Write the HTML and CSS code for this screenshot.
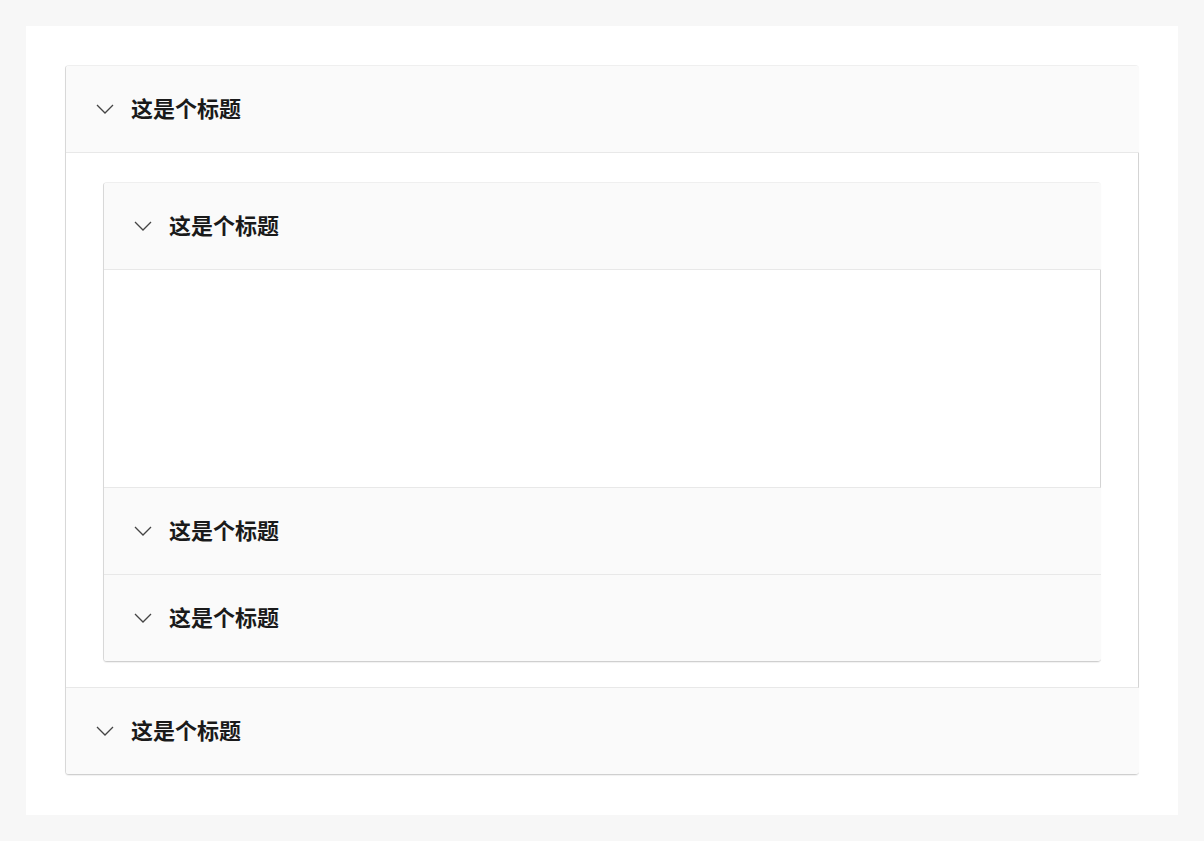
FILE: index.html
```html
<!DOCTYPE html>
<html lang="zh">
<head>
<meta charset="utf-8">
<link rel="stylesheet" href="styles.css">
</head>
<body>
<div class="panel">
  <div class="acc">
    <div class="acc-header">
      <svg class="chev" viewBox="0 0 18 10" width="18" height="10"><path d="M1 1 L9 9 L17 1" fill="none" stroke="#444" stroke-width="1.3"/></svg>
      <span class="title">这是个标题</span>
    </div>
    <div class="acc-body outer-body">
      <div class="acc">
        <div class="acc-header">
          <svg class="chev" viewBox="0 0 18 10" width="18" height="10"><path d="M1 1 L9 9 L17 1" fill="none" stroke="#444" stroke-width="1.3"/></svg>
          <span class="title">这是个标题</span>
        </div>
        <div class="acc-body inner-body"></div>
        <div class="acc-header">
          <svg class="chev" viewBox="0 0 18 10" width="18" height="10"><path d="M1 1 L9 9 L17 1" fill="none" stroke="#444" stroke-width="1.3"/></svg>
          <span class="title">这是个标题</span>
        </div>
        <div class="acc-header last">
          <svg class="chev" viewBox="0 0 18 10" width="18" height="10"><path d="M1 1 L9 9 L17 1" fill="none" stroke="#444" stroke-width="1.3"/></svg>
          <span class="title">这是个标题</span>
        </div>
      </div>
    </div>
    <div class="acc-header last">
      <svg class="chev" viewBox="0 0 18 10" width="18" height="10"><path d="M1 1 L9 9 L17 1" fill="none" stroke="#444" stroke-width="1.3"/></svg>
      <span class="title">这是个标题</span>
    </div>
  </div>
</div>
</body>
</html>
```
FILE: styles.css
```css
html, body {
  margin: 0;
  padding: 0;
  background: #f7f7f7;
  font-family: "Noto Sans CJK SC", "Noto Sans", sans-serif;
}
body {
  padding: 26px;
}
.panel {
  background: #fff;
  padding: 39px;
  height: 711px;
}
.acc {
  border-radius: 4px;
  border-left: 1px solid #d8d8d8;
  border-top: 1px solid #efefef;
  border-bottom: 1px solid #cfcfcf;
  box-shadow: 0 1px 1px rgba(0, 0, 0, 0.06);
  overflow: hidden;
}
.acc-header {
  display: flex;
  align-items: center;
  height: 85px;
  background: #fafafa;
  border-bottom: 1px solid #e8e8e8;
  padding-left: 30px;
  padding-bottom: 1px;
}
.acc-header.last {
  border-bottom: none;
}
.chev {
  display: block;
  margin-right: 17px;
  margin-top: 1px;
}
.title {
  font-size: 22px;
  font-weight: 600;
  color: #1a1a1a;
  line-height: 1;
  position: relative;
  top: -2px;
}
.acc-body {
  background: #fff;
  border-right: 1px solid #d4d4d4;
  border-bottom: 1px solid #e8e8e8;
}
.outer-body {
  padding: 29px 37px 25px 37px;
}
.inner-body {
  height: 217px;
}
```
